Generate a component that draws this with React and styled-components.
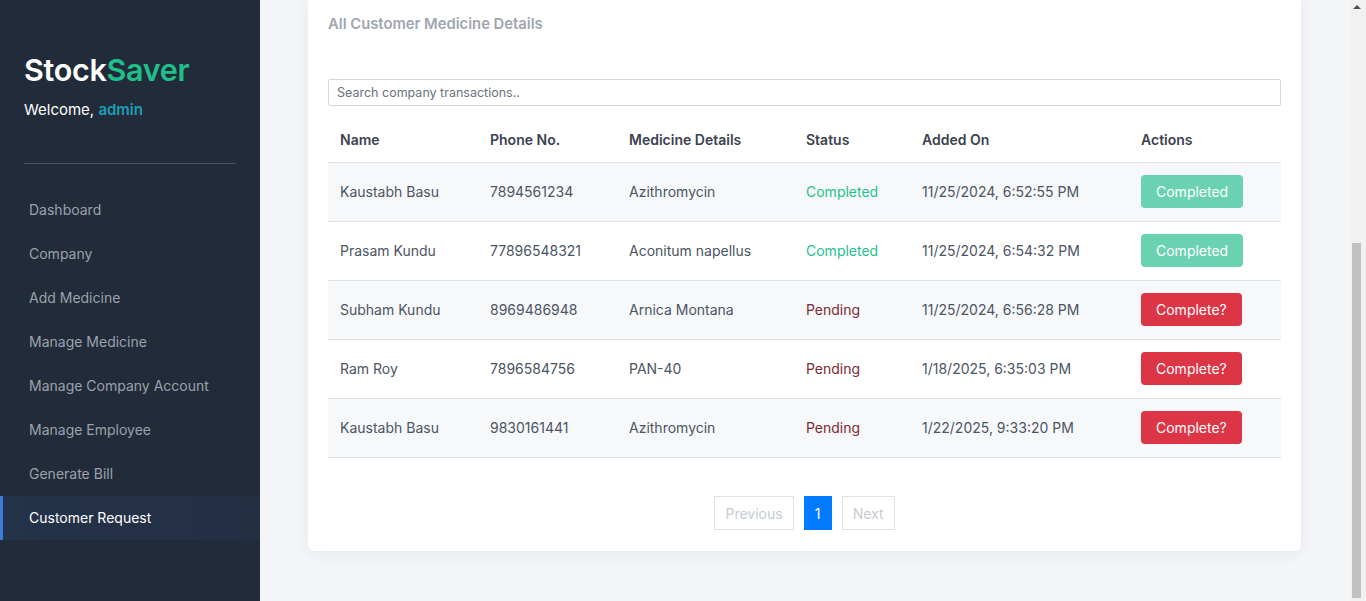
import React from "react";
import styled, { createGlobalStyle } from "styled-components";

const GlobalStyle = createGlobalStyle`
  html, body { margin: 0; padding: 0; }
  body {
    font-family: Inter, "Noto Sans", "Liberation Sans", sans-serif;
    background: #f4f5f9;
    color: #4b5563;
  }
`;

const Layout = styled.div`
  display: flex;
  height: 100vh;
  overflow: hidden;
`;

const Sidebar = styled.aside`
  flex: 0 0 260px;
  background: #222b39;
  display: flex;
  flex-direction: column;
`;

const Brand = styled.div`
  padding: 50px 24px 0;
`;

const Logo = styled.h1`
  margin: 0;
  font-size: 30.5px;
  font-weight: 600;
  line-height: 40px;
  color: #ffffff;
  letter-spacing: -0.3px;
`;

const LogoAccent = styled.span`
  color: #1fbf8a;
`;

const Welcome = styled.p`
  margin: 9px 0 0;
  font-size: 15px;
  line-height: 22px;
  color: #ffffff;
`;

const UserName = styled.span`
  color: #1a9fb8;
  font-weight: 600;
`;

const Divider = styled.hr`
  margin: 42px 24px 24px;
  border: 0;
  border-top: 1px solid #4a5462;
`;

const Nav = styled.nav`
  display: flex;
  flex-direction: column;
`;

const NavItem = styled.a`
  display: block;
  height: 44px;
  line-height: 44px;
  padding-left: 26px;
  border-left: 3px solid ${(p) => (p.$active ? "#3b7ddb" : "transparent")};
  background: ${(p) =>
    p.$active ? "linear-gradient(90deg, #24324a 0%, #232f43 100%)" : "transparent"};
  color: ${(p) => (p.$active ? "#ffffff" : "#9aa2ad")};
  font-size: 14px;
  text-decoration: none;
`;

const Main = styled.main`
  flex: 1;
  min-width: 0;
  padding: 0 50px 50px 48px;
`;

const Card = styled.section`
  margin-top: -8px;
  background: #ffffff;
  border-radius: 6px;
  box-shadow: 0 4px 14px rgba(30, 40, 60, 0.05);
  padding: 21px 20px 21px;
`;

const Title = styled.h2`
  margin: 0 0 44px;
  font-size: 14.8px;
  line-height: 22px;
  font-weight: 600;
  color: #a0a6b0;
`;

const Search = styled.input`
  display: block;
  box-sizing: border-box;
  width: 100%;
  height: 27px;
  padding: 0 8px;
  border: 1px solid #d3d7dc;
  border-radius: 2px;
  font-family: inherit;
  font-size: 12.5px;
  color: #4b5563;
  outline: none;
  &::placeholder { color: #6b7280; }
`;

const Table = styled.table`
  width: 100%;
  margin-top: 11px;
  border-collapse: collapse;
  table-layout: fixed;
`;

const Th = styled.th`
  text-align: left;
  padding: 12px 12px 12px;
  font-size: 14px;
  line-height: 21px;
  font-weight: 600;
  color: #3b4250;
  border-bottom: 1px solid #dee2e6;
`;

const Row = styled.tr`
  background: ${(p) => (p.$striped ? "#f7f8fa" : "#ffffff")};
  border-bottom: 1px solid #dee2e6;
`;

const Td = styled.td`
  padding: 12px 12px 13px;
  height: 33px;
  font-size: 14px;
  line-height: 21px;
  color: ${(p) => p.$color || "#4b5563"};
  white-space: nowrap;
`;

const ActionButton = styled.button`
  height: 33px;
  padding: 0 15px;
  border: 0;
  border-radius: 4px;
  font-family: inherit;
  font-size: 14px;
  color: #ffffff;
  background: ${(p) => (p.$done ? "#6ad2b1" : "#dc3545")};
  cursor: ${(p) => (p.$done ? "default" : "pointer")};
`;

const Pagination = styled.div`
  display: flex;
  justify-content: center;
  gap: 10px;
  margin-top: 38px;
`;

const PageButton = styled.button`
  height: 34px;
  padding: 0 10px;
  min-width: 28px;
  border: 1px solid ${(p) => (p.$active ? "#007bff" : "#dee2e6")};
  background: ${(p) => (p.$active ? "#007bff" : "#ffffff")};
  color: ${(p) => (p.$active ? "#ffffff" : "#c8ccd2")};
  font-family: inherit;
  font-size: 14px;
  border-radius: 0;
`;

const ScrollTrack = styled.div`
  flex: 0 0 15px;
  background: #f1f1f1;
  display: flex;
  flex-direction: column;
  align-items: flex-start;
  padding: 0 4px 3px 1px;
  box-sizing: border-box;
`;

const ScrollArrow = styled.div`
  margin: 5px 0 0 1px;
  width: 0;
  height: 0;
  border-left: 4px solid transparent;
  border-right: 4px solid transparent;
  border-bottom: 4px solid #505050;
`;

const ScrollThumb = styled.div`
  margin-top: auto;
  width: 9px;
  height: 355px;
  background: #c1c1c1;
`;

const navItems = [
  "Dashboard",
  "Company",
  "Add Medicine",
  "Manage Medicine",
  "Manage Company Account",
  "Manage Employee",
  "Generate Bill",
  "Customer Request",
];

const rows = [
  { name: "Kaustabh Basu", phone: "7894561234", med: "Azithromycin", done: true, date: "11/25/2024, 6:52:55 PM" },
  { name: "Prasam Kundu", phone: "77896548321", med: "Aconitum napellus", done: true, date: "11/25/2024, 6:54:32 PM" },
  { name: "Subham Kundu", phone: "8969486948", med: "Arnica Montana", done: false, date: "11/25/2024, 6:56:28 PM" },
  { name: "Ram Roy", phone: "7896584756", med: "PAN-40", done: false, date: "1/18/2025, 6:35:03 PM" },
  { name: "Kaustabh Basu", phone: "9830161441", med: "Azithromycin", done: false, date: "1/22/2025, 9:33:20 PM" },
];

const colWidths = [150, 139, 177, 116, 219, 152];
const headers = ["Name", "Phone No.", "Medicine Details", "Status", "Added On", "Actions"];

export default function App() {
  return (
    <>
      <GlobalStyle />
      <Layout>
        <Sidebar>
          <Brand>
            <Logo>
              Stock<LogoAccent>Saver</LogoAccent>
            </Logo>
            <Welcome>
              Welcome, <UserName>admin</UserName>
            </Welcome>
          </Brand>
          <Divider />
          <Nav>
            {navItems.map((item) => (
              <NavItem key={item} href="#" $active={item === "Customer Request"}>
                {item}
              </NavItem>
            ))}
          </Nav>
        </Sidebar>
        <Main>
          <Card>
            <Title>All Customer Medicine Details</Title>
            <Search placeholder="Search company transactions.." />
            <Table>
              <colgroup>
                {colWidths.map((w, i) => (
                  <col key={i} style={{ width: w }} />
                ))}
              </colgroup>
              <thead>
                <tr>
                  {headers.map((h) => (
                    <Th key={h}>{h}</Th>
                  ))}
                </tr>
              </thead>
              <tbody>
                {rows.map((r, i) => (
                  <Row key={i} $striped={i % 2 === 0}>
                    <Td>{r.name}</Td>
                    <Td>{r.phone}</Td>
                    <Td>{r.med}</Td>
                    <Td $color={r.done ? "#1fc18c" : "#7d2a33"}>{r.done ? "Completed" : "Pending"}</Td>
                    <Td>{r.date}</Td>
                    <Td>
                      <ActionButton $done={r.done}>{r.done ? "Completed" : "Complete?"}</ActionButton>
                    </Td>
                  </Row>
                ))}
              </tbody>
            </Table>
            <Pagination>
              <PageButton disabled>Previous</PageButton>
              <PageButton $active>1</PageButton>
              <PageButton disabled>Next</PageButton>
            </Pagination>
          </Card>
        </Main>
        <ScrollTrack>
          <ScrollArrow />
          <ScrollThumb />
        </ScrollTrack>
      </Layout>
    </>
  );
}
